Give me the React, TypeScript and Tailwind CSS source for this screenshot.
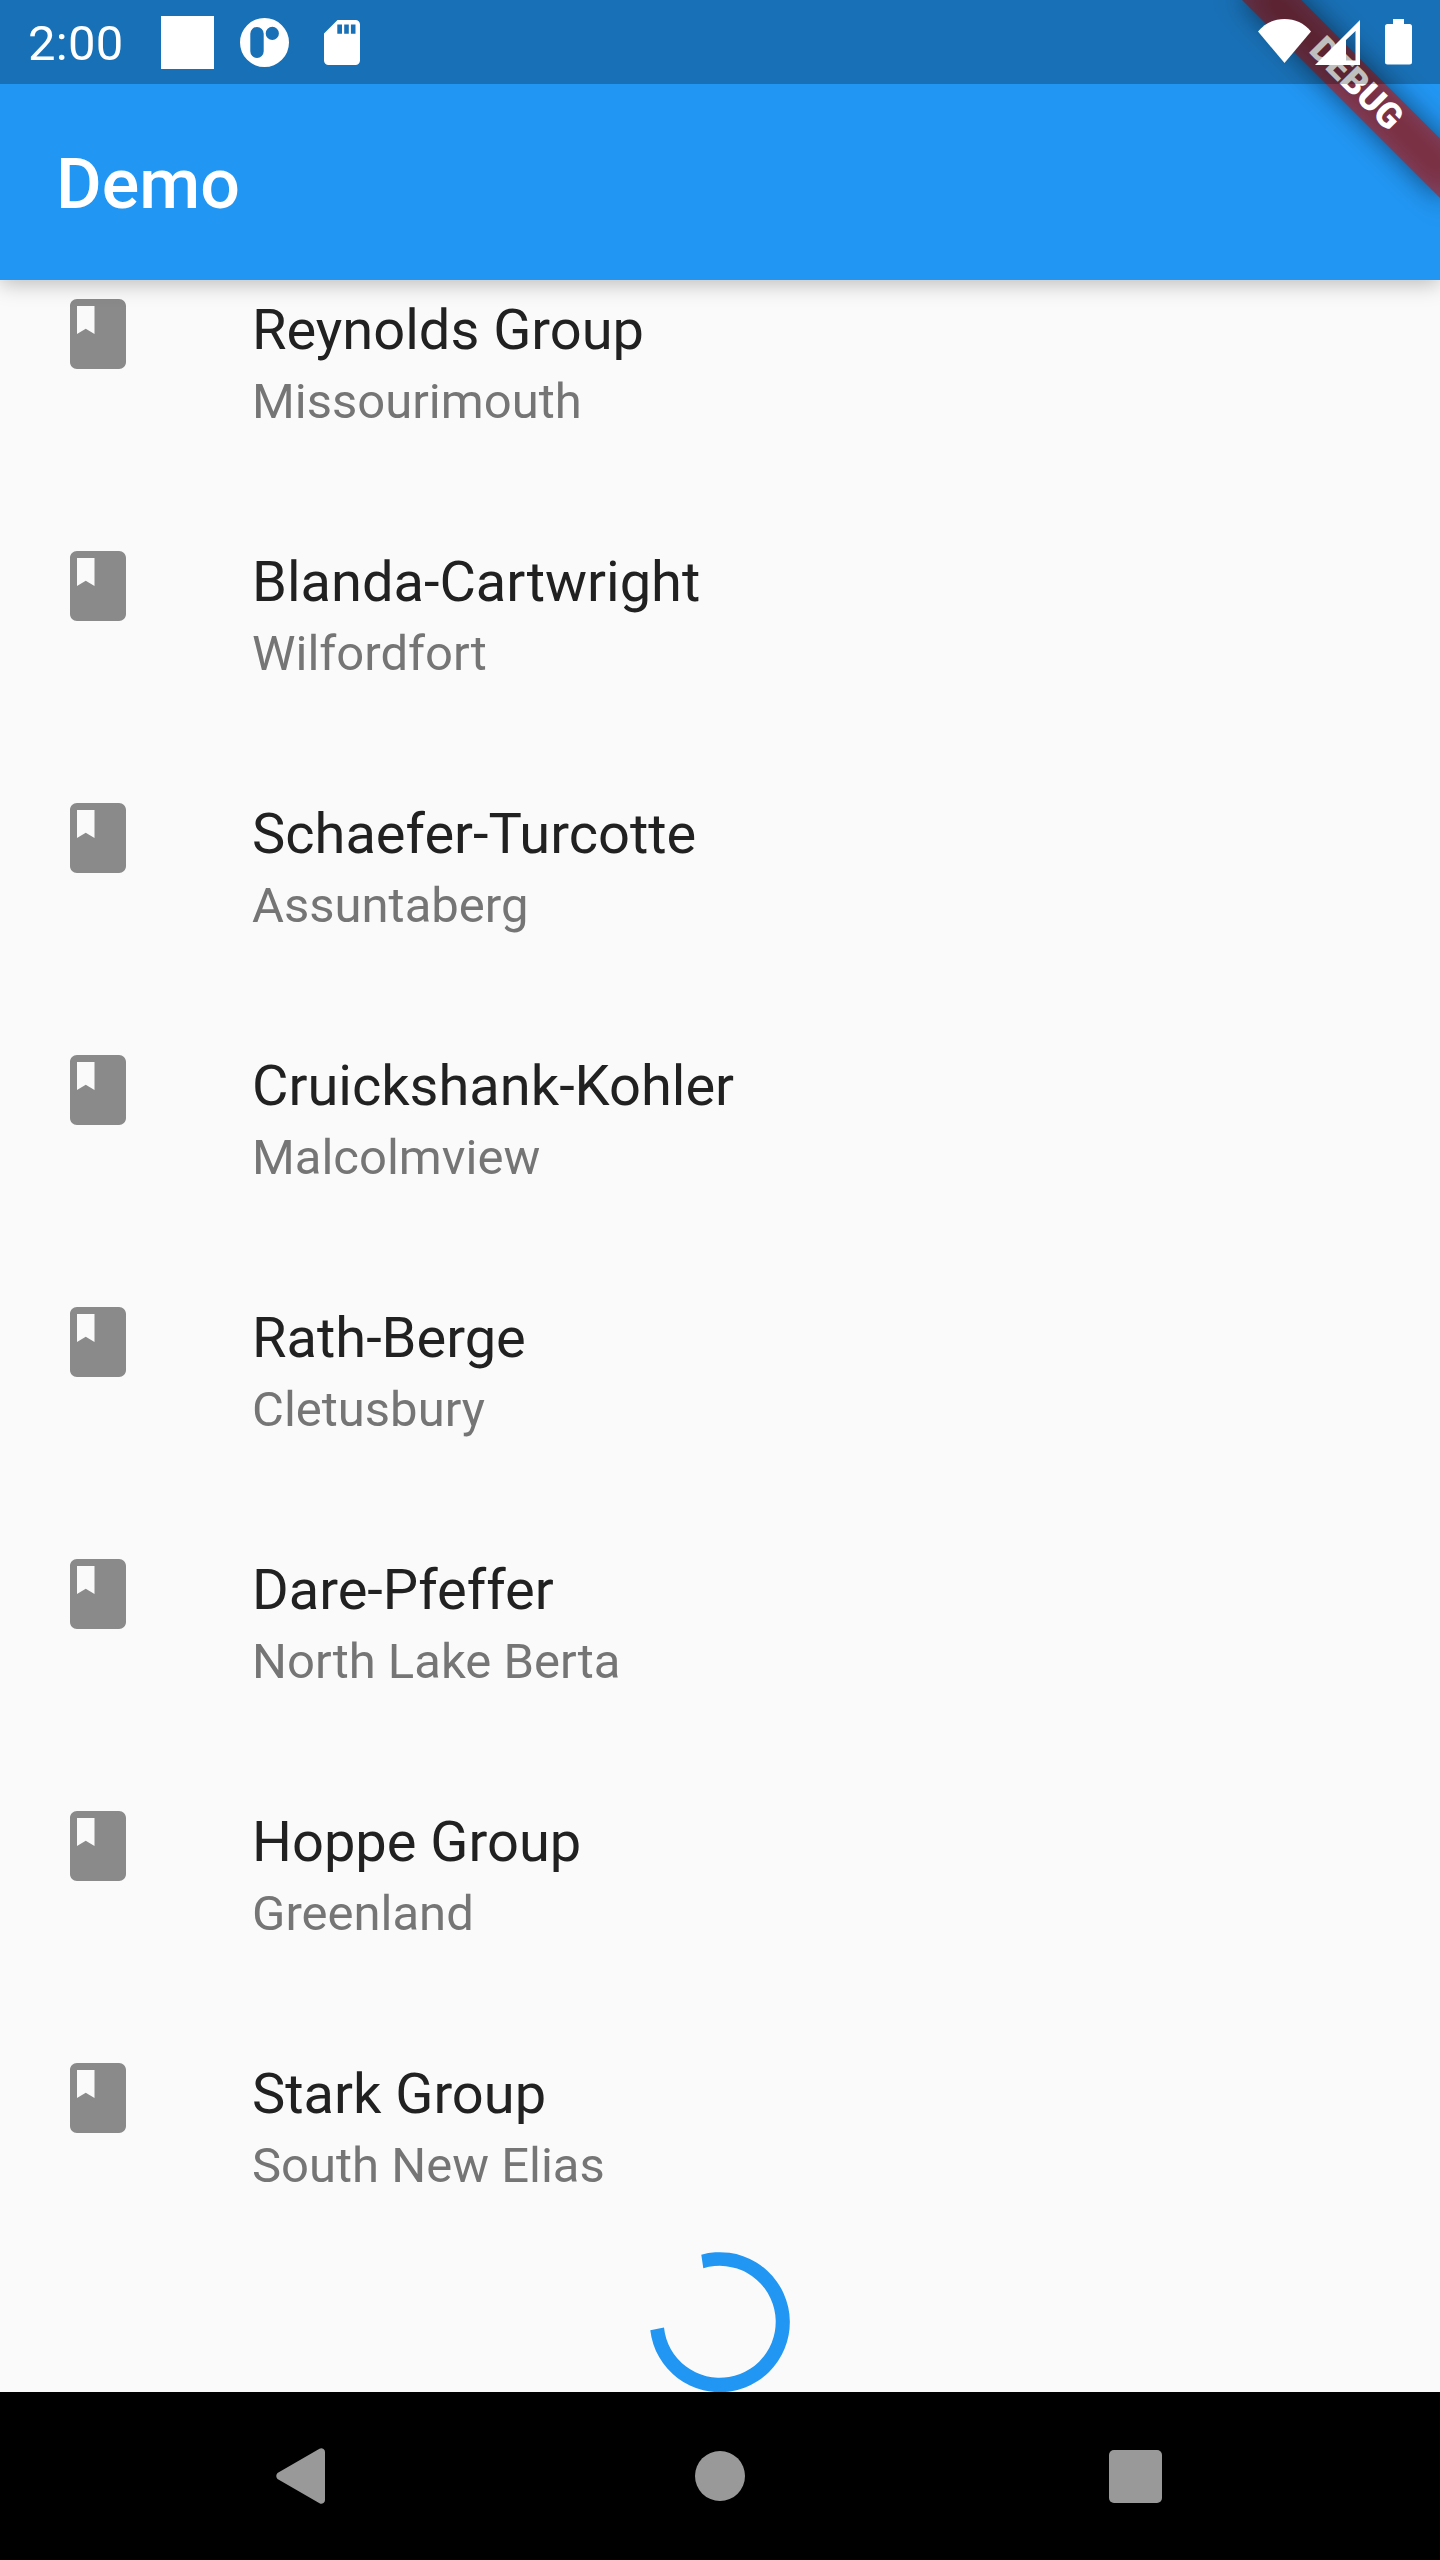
const items = [
  ["Reynolds Group", "Missourimouth"],
  ["Blanda-Cartwright", "Wilfordfort"],
  ["Schaefer-Turcotte", "Assuntaberg"],
  ["Cruickshank-Kohler", "Malcolmview"],
  ["Rath-Berge", "Cletusbury"],
  ["Dare-Pfeffer", "North Lake Berta"],
  ["Hoppe Group", "Greenland"],
  ["Stark Group", "South New Elias"],
];

function StatusBar() {
  return (
    <div className="absolute inset-x-0 top-0 z-20 flex h-[84px] items-center bg-black/25 text-white">
      <span className="ml-[28px] w-[133px] pt-[4px] text-[49px] leading-[84px] tracking-[0.3px]">2:00</span>
      <div className="size-[53px] bg-white" />
      <svg className="ml-[26px] size-[49px]" viewBox="0 0 49 49" fill="#fff">
        <path fillRule="evenodd" d="M24.5 0a24.5 24.5 0 1 0 0 49a24.5 24.5 0 1 0 0-49ZM10.3 15.7a6.7 6.7 0 0 1 13.4 0v17.6a6.7 6.7 0 0 1-13.4 0ZM32.3 8.8a6.6 6.6 0 1 0 0 13.2a6.6 6.6 0 1 0 0-13.2Z" />
      </svg>
      <svg className="ml-[35px] h-[45px] w-[36px]" viewBox="0 0 36 45" fill="#fff">
        <path fillRule="evenodd" d="M13.5 0H31.500a4.500 4.500 0 0 1 4.500 4.500V40.500a4.500 4.500 0 0 1-4.500 4.500H4.500A4.500 4.500 0 0 1 0 40.500V13.500ZM13.300 4.500V13.700H18V4.500ZM20.200 4.500V13.700H24.800V4.500ZM26.900 4.500V13.700H31.500V4.500Z" />
      </svg>
      <svg className="mb-[2px] ml-auto h-[44px] w-[53px]" viewBox="0 0 53 44" fill="#fff">
        <path d="M0 12.500C7 4 16 0 26.500 0S46 4 53 12.500L26.500 44Z" />
      </svg>
      <svg className="ml-[4px] h-[45px] w-[45px]" viewBox="0 0 45 45" fill="#fff">
        <path fillRule="evenodd" d="M45 0V45H0ZM40.500 11L31 20V40.500H40.500Z" />
      </svg>
      <svg className="mr-[28px] ml-[25px] h-[46px] w-[27px]" viewBox="0 0 27 46" fill="#fff">
        <path d="M8 0H19V5H24.500A2.500 2.500 0 0 1 27 7.500V43a2.500 2.500 0 0 1-2.500 2.500H2.500A2.500 2.500 0 0 1 0 43V7.500A2.500 2.500 0 0 1 2.500 5H8Z" />
      </svg>
    </div>
  );
}

function DebugBanner() {
  return (
    <div className="absolute top-0 right-0 z-10 size-[280px] overflow-hidden">
      <div className="absolute top-0 left-[280px] h-0 w-0 origin-top-left rotate-45">
        <div className="absolute top-[98px] left-[-140px] h-[42px] w-[280px] bg-black/50 blur-[13.9px]" />
        <div className="absolute top-[98px] left-[-140px] flex h-[42px] w-[280px] items-center justify-center bg-[#b71c1c]/63 text-[35.7px] leading-none font-black text-white">
          DEBUG
        </div>
      </div>
    </div>
  );
}

function BookIcon() {
  return (
    <svg className="mt-[28px] ml-[56px] size-[84px] shrink-0" viewBox="0 0 24 24" fill="#8a8a8a">
      <path d="M18 2H6c-1.100 0-2 .9-2 2v16c0 1.100.9 2 2 2h12c1.100 0 2-.9 2-2V4c0-1.100-.9-2-2-2zM6 4h5v8l-2.500-1.500L6 12V4z" />
    </svg>
  );
}

export default function App() {
  return (
    <div className="relative flex h-[2560px] w-[1440px] flex-col overflow-hidden bg-[#fafafa] font-[Roboto,sans-serif]">
      <StatusBar />
      <DebugBanner />
      <header className="z-[1] flex h-[280px] shrink-0 items-center bg-[#2196f3] pt-[88px] pl-[56px] shadow-[0_4px_20px_rgba(0,0,0,0.25)]">
        <h1 className="text-[70px] leading-[82px] font-medium text-white">Demo</h1>
      </header>
      <main className="flex min-h-0 flex-1 flex-col">
        <ul className="-mt-4">
          {items.map(([name, city]) => (
            <li key={name} className="flex h-[252px]">
              <BookIcon />
              <div className="ml-[112px] pt-[33px]">
                <p className="text-[56px] leading-[66px] text-[#212121]">{name}</p>
                <p className="mt-[10px] text-[49px] leading-[58px] text-[#757575]">{city}</p>
              </div>
            </li>
          ))}
        </ul>
        <svg className="-mt-[28px] size-[140px] shrink-0 self-center" viewBox="0 0 140 140" fill="#2196f3">
          <path d="M51.300 2.700A70 70 0 1 1 .3 78.300L14 75.500A56 56 0 1 0 53.300 16.300Z" />
        </svg>
      </main>
      <nav className="flex h-[168px] shrink-0 items-center bg-black">
        <svg className="ml-[276px] h-[56px] w-[49px]" viewBox="0 0 49 56" fill="#999">
          <path d="M1.500 25L43.500 .8Q45.500-.4 47.500 1Q49 2 49 4V52Q49 54 47.500 55Q45.500 56.400 43.500 55.200L1.500 31Q-1 28 1.500 25Z" />
        </svg>
        <div className="ml-[370px] size-[50px] rounded-full bg-[#999]" />
        <div className="ml-[363.500px] size-[53px] rounded-[5px] bg-[#999]" />
      </nav>
    </div>
  );
}
